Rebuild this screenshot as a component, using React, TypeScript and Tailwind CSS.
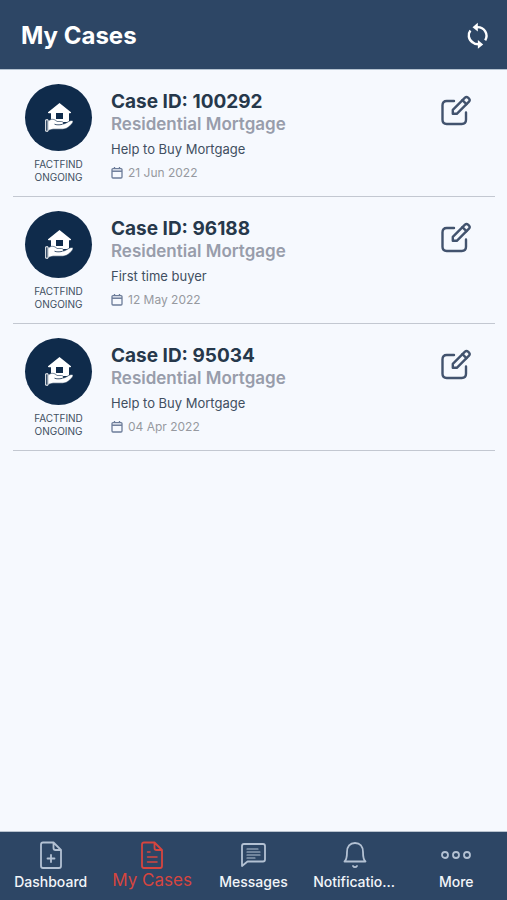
import type { ReactNode } from "react";

type CaseItem = { id: string; type: string; detail: string; date: string; iso: string };

const cases: CaseItem[] = [
  { id: "100292", type: "Residential Mortgage", detail: "Help to Buy Mortgage", date: "21 Jun 2022", iso: "2022-06-21" },
  { id: "96188", type: "Residential Mortgage", detail: "First time buyer", date: "12 May 2022", iso: "2022-05-12" },
  { id: "95034", type: "Residential Mortgage", detail: "Help to Buy Mortgage", date: "04 Apr 2022", iso: "2022-04-04" },
];

function SyncIcon() {
  return (
    <svg width="24" height="28" viewBox="0 0 24 28" fill="none" aria-hidden="true">
      <path d="M6.8 20.600C2.300 17.600 1.600 12 4.400 8.400" stroke="#fff" strokeWidth="2.4" />
      <path d="M10.500 5.200c8.200-.6 12.200 7.200 8.700 13.200" stroke="#fff" strokeWidth="2.4" />
      <path d="M6.500 5.200 11.800.8v8.800z" fill="#fff" />
      <path d="M17.200 22.400 11.900 18v8.800z" fill="#fff" />
      <path d="M6.300 20.100c1.600 1.400 3.700 2.200 6.200 2.200" stroke="#fff" strokeWidth="2.4" />
    </svg>
  );
}

function EditIcon() {
  return (
    <svg width="32" height="32" viewBox="0 0 32 32" fill="none" stroke="#42536e" strokeWidth="2.4" strokeLinecap="round" strokeLinejoin="round" aria-hidden="true">
      <path d="M14 6H6.700Q2.500 6 2.500 10.200v14.600q0 4.200 4.200 4.200h15.100q4.200 0 4.200-4.200V17.500" />
      <path d="M12.800 18.800v-4L25 2.600a2.200 2.200 0 0 1 3 0l1 1a2.200 2.200 0 0 1 0 3L16.800 18.800z" />
      <path d="M22.400 5.200l4 4" />
    </svg>
  );
}

function HouseHandIcon() {
  return (
    <svg width="30" height="32" viewBox="0 0 30 32" aria-hidden="true">
      <path d="M15.500 1 27 10.200q.5 1-1 1H25V20H7V11.200H5q-1.500 0-1-1z" fill="#fff" />
      <path d="M12 11h7v6h-7z" fill="#0f2b4b" />
      <path d="M4 19.200c3-2.700 6.500-2.400 9 .3h4.500c2 0 2.500 2 1 2.700 3.400-.3 6-3.200 8.500-3.700 2-.3 2.700 1 1.500 2.500-3 3.700-6 6.200-10 6.200H9L4 28.500z" fill="#fff" stroke="#0f2b4b" strokeWidth=".6" />
      <path d="M10.500 22.200c2 .8 4.700.8 7.500.2" fill="none" stroke="#0f2b4b" strokeWidth=".8" />
      <path d="M1.700 17.800H4v11.400H1.700z" fill="#0f2b4b" stroke="#fff" strokeWidth="1" />
    </svg>
  );
}

function CalendarIcon() {
  return (
    <svg width="12" height="12" viewBox="0 0 12 12" fill="none" stroke="#6c7c99" aria-hidden="true">
      <rect x="1" y="1.600" width="10" height="9.400" rx="1" strokeWidth="1.3" />
      <path d="M1 4.200h10" strokeWidth="1.5" />
      <path d="M3.500 0v2M8.500 0v2" strokeWidth="1.3" />
    </svg>
  );
}

function CaseRow({ item }: { item: CaseItem }) {
  return (
    <li className="flex items-start border-b border-[#c3c8d1] pt-3.5 pb-3">
      <div className="flex w-[91px] shrink-0 flex-col items-center">
        <div className="flex size-[67px] items-center justify-center rounded-full bg-[#0f2b4b]">
          <HouseHandIcon />
        </div>
        <p className="mt-[7px] w-16 text-center text-[10px] leading-[13px] text-[#414f61]">FACTFIND ONGOING</p>
      </div>
      <div className="min-w-0 flex-1 pt-1.5 pl-[7px]">
        <h2 className="text-[19px] leading-[23px] font-bold text-[#26384b]">Case ID: {item.id}</h2>
        <p className="text-[17px] leading-[23px] font-semibold text-[#989dab]">{item.type}</p>
        <p className="mt-[3px] text-[13px] leading-5 text-[#414f61]">{item.detail}</p>
        <p className="mt-1 flex items-center gap-[5px] text-xs leading-5 text-[#9699a0]">
          <CalendarIcon />
          <time dateTime={item.iso}>{item.date}</time>
        </p>
      </div>
      <button type="button" aria-label={`Edit case ${item.id}`} className="mt-[11px] mr-[23px] shrink-0">
        <EditIcon />
      </button>
    </li>
  );
}

function NavIcon({ children }: { children: ReactNode }) {
  return (
    <svg width="32" height="30" viewBox="0 0 32 30" fill="none" stroke="currentColor" strokeWidth="1.8" strokeLinecap="round" strokeLinejoin="round" aria-hidden="true">
      {children}
    </svg>
  );
}

const filePath = "M8 2.500h10.500l7.500 7.500V26q0 2-2 2H8q-2 0-2-2V4.500q0-2 2-2zM18.500 2.500V8q0 2 2 2H26";

const tabs: { label: string; active?: boolean; icon: ReactNode }[] = [
  { label: "Dashboard", icon: <><path d={filePath} /><path d="M16 15v7M12.500 18.500h7" /></> },
  { label: "My Cases", active: true, icon: <><path d={filePath} /><path d="M11.500 12h2.500M11.500 17h9.500M11.500 22h9.500" strokeWidth="1.5" /></> },
  { label: "Messages", icon: <><path d="M7 4h19q2 0 2 2v13.500q0 2-2 2H10.500L5 26V6q0-2 2-2z" /><path d="M10 9h11M10 12h13M10 15h13M10 18h8" strokeWidth="1.2" /></> },
  { label: "Notifications", icon: <><path d="M5.500 21.500C8 19.500 8 16 8 12C8 6.500 11 3 16 3s8 3.500 8 9c0 4 0 7.500 2.500 9.500zM14 26c1 1.500 3 1.500 4 0" /></> },
  { label: "More", icon: <><circle cx="5" cy="15" r="3" /><circle cx="16" cy="15" r="3" /><circle cx="27" cy="15" r="3" /></> },
];

export default function App() {
  return (
    <div className="flex min-h-screen flex-col bg-[#f6f9fe] font-['Inter',sans-serif]">
      <header className="flex items-center justify-between border-b border-[#b4c2d0] bg-[#2d4665] pt-[18px] pr-[17px] pb-[15px] pl-[21px]">
        <h1 className="text-2xl leading-9 font-bold text-white">My Cases</h1>
        <button type="button" aria-label="Refresh cases"><SyncIcon /></button>
      </header>
      <main className="flex-1 pr-3 pl-[13px]">
        <ul>
          {cases.map((item) => <CaseRow key={item.id} item={item} />)}
        </ul>
      </main>
      <nav aria-label="Main" className="sticky bottom-0 grid grid-cols-5 border-t border-[#b9c3cf] bg-[#2d4665] pt-2 pb-1.5">
        {tabs.map((tab) => (
          <a
            key={tab.label}
            href="#"
            aria-current={tab.active ? "page" : undefined}
            className={tab.active ? "flex min-w-0 flex-col items-center text-[#d6453f]" : "flex min-w-0 flex-col items-center text-[#b3c1d3]"}
          >
            <NavIcon>{tab.icon}</NavIcon>
            <span className={tab.active ? "text-[17px] leading-5" : "w-full truncate px-[9px] text-center text-sm leading-6 font-medium text-[#f2f5f9]"}>
              {tab.label}
            </span>
          </a>
        ))}
      </nav>
    </div>
  );
}
